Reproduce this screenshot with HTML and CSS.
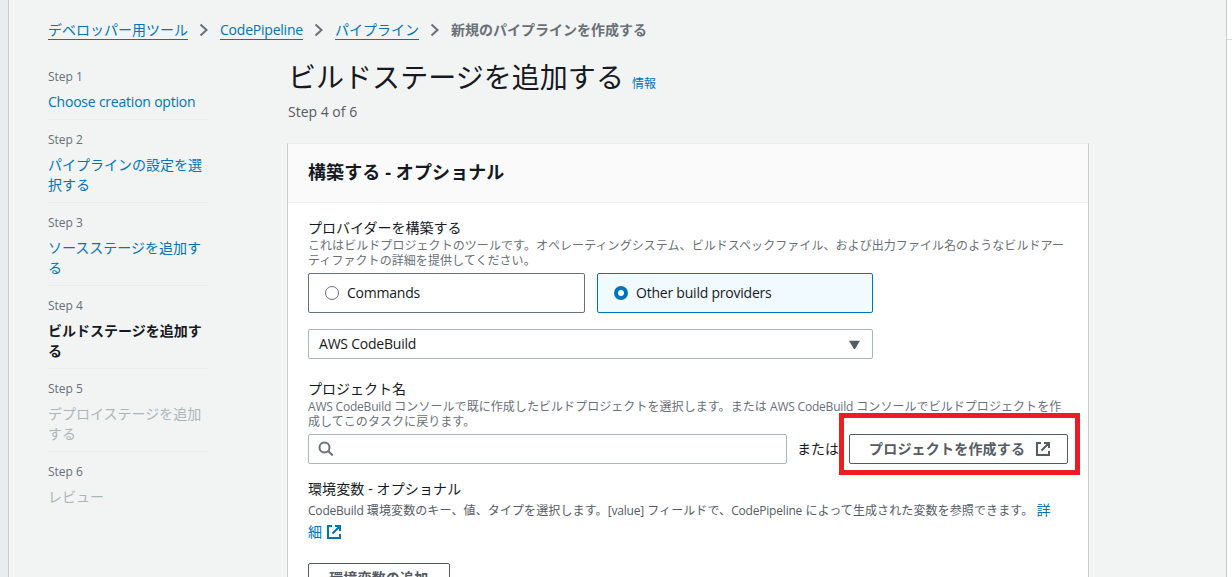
FILE: index.html
```
<!DOCTYPE html>
<html lang="ja">
<head>
<meta charset="utf-8">
<title>ビルドステージを追加する</title>
<link rel="stylesheet" href="styles.css">
</head>
<body>
<div class="app">
  <div class="nav-rail"></div>
  <main class="page">
    <nav class="breadcrumbs">
      <a>デベロッパー用ツール</a>
      <svg class="chevron" viewBox="0 0 10 14"><path d="M1.500 1.500 7.500 7l-6 5.500"/></svg>
      <a class="en">CodePipeline</a>
      <svg class="chevron" viewBox="0 0 10 14"><path d="M1.500 1.500 7.500 7l-6 5.500"/></svg>
      <a>パイプライン</a>
      <svg class="chevron" viewBox="0 0 10 14"><path d="M1.500 1.500 7.500 7l-6 5.500"/></svg>
      <span class="current">新規のパイプラインを作成する</span>
    </nav>
    <div class="columns">
      <ol class="steps">
        <li><small>Step 1</small><a class="en">Choose creation option</a></li>
        <li><small>Step 2</small><a>パイプラインの設定を選<br>択する</a></li>
        <li><small>Step 3</small><a>ソースステージを追加す<br>る</a></li>
        <li><small>Step 4</small><b>ビルドステージを追加す<br>る</b></li>
        <li><small>Step 5</small><span class="disabled">デプロイステージを追加<br>する</span></li>
        <li><small>Step 6</small><span class="disabled">レビュー</span></li>
      </ol>
      <section class="content">
        <div class="title"><h1>ビルドステージを追加する</h1><a class="info">情報</a></div>
        <p class="progress">Step 4 of 6</p>
        <div class="card">
          <header><h2>構築する - オプショナル</h2></header>
          <div class="card-body">
            <div class="label">プロバイダーを構築する</div>
            <p class="hint">これはビルドプロジェクトのツールです。オペレーティングシステム、ビルドスペックファイル、および出力ファイル名のようなビルドアー<br>ティファクトの詳細を提供してください。</p>
            <div class="tiles">
              <div class="tile"><i class="radio"></i><span class="en">Commands</span></div>
              <div class="tile selected"><i class="radio"></i><span class="en">Other build providers</span></div>
            </div>
            <div class="select"><span class="en">AWS CodeBuild</span><svg class="caret" viewBox="0 0 10 8"><path d="M0 .5h10L5.500 8h-1z"/></svg></div>
            <div class="label project-label">プロジェクト名</div>
            <p class="hint project-hint"><span class="en-s">AWS CodeBuild</span> コンソールで既に作成したビルドプロジェクトを選択します。または <span class="en-s">AWS CodeBuild</span> コンソールでビルドプロジェクトを作<br>成してこのタスクに戻ります。</p>
            <div class="project-row">
              <div class="search"><svg viewBox="0 0 16 16"><circle cx="6.500" cy="6.500" r="5"/><path d="m10.300 10.300 4.500 4.200"/></svg></div>
              <span class="or">または</span>
              <div class="create-wrap">
                <div class="button create"><span>プロジェクトを作成する</span><svg class="external" viewBox="0 0 16 16"><path d="M6 2H2v12h12v-4M9 2h5v5M14 2 6.500 9.500"/></svg></div>
                <div class="highlight"></div>
              </div>
            </div>
            <div class="label env-label">環境変数 - オプショナル</div>
            <p class="env-hint"><span class="en-s">CodeBuild</span> 環境変数のキー、値、タイプを選択します。<span class="en-s">[value]</span> フィールドで、<span class="en-s">CodePipeline</span> によって生成された変数を参照できます。 <a>詳<br>細 <svg class="external" viewBox="0 0 16 16"><path d="M6 2H2v12h12v-4M9 2h5v5M14 2 6.500 9.500"/></svg></a></p>
            <div class="button add-env">環境変数の追加</div>
          </div>
        </div>
      </section>
    </div>
  </main>
  <aside class="right-rail"><div></div></aside>
</div>
</body>
</html>
```
FILE: styles.css
```
* { box-sizing: border-box; }
html, body { margin: 0; height: 577px; overflow: hidden; }
body { font: 14px/20px "Open Sans", "Noto Sans CJK JP", sans-serif; color: #16191f; background: #fff; }
p, h1, h2, ol { margin: 0; padding: 0; }
a { color: #0073bb; }
svg { fill: none; stroke: currentColor; flex: none; }
.app { display: flex; height: 577px; overflow: hidden; }
.nav-rail { width: 9px; background: #eaeded; border-right: 1px solid #c6cccc; flex: none; }
.page { width: 1217px; flex: none; background: #f2f3f3; padding: 20px 0 0 39px; }
.right-rail { width: 6px; border-left: 1px solid #c6cccc; }
.right-rail div { height: 40px; border-bottom: 1px solid #d5dbdb; }
.en { letter-spacing: -.22px; }
.en-s { letter-spacing: -.2px; }
.breadcrumbs { display: flex; height: 20px; align-items: flex-start; white-space: nowrap; }
.breadcrumbs a { height: 20px; border-bottom: 1px solid #0073bb; }
.chevron { width: 10px; height: 14px; margin: 3px 11px; color: #687078; stroke-width: 2; }
.current { color: #687078; font-weight: 700; }
.columns { display: flex; }
.steps { list-style: none; width: 160px; margin: 27px 80px 0 0; flex: none; }
.steps li { border-bottom: 1px solid #eaeded; padding-bottom: 7px; margin-bottom: 10px; }
.steps li:last-child { border: 0; }
.steps small { display: block; font-size: 12px; line-height: 20px; margin-bottom: 5px; color: #687078; }
.steps a, .steps b, .steps .disabled { display: block; white-space: nowrap; }
.steps .disabled { color: #aab7b8; }
.content { width: 800px; flex: none; }
.title { display: flex; align-items: baseline; gap: 8px; height: 36px; margin-top: 19px; line-height: 36px; }
.title h1 { font-size: 28px; font-weight: 400; letter-spacing: .04px; }
.info { font-size: 12px; }
.progress { color: #545b64; margin: 7px 0 21px; }
.card { background: #fff; border: 1px solid #c6cccc; border-top-color: #eaeded; width: 802px; margin-left: -1px; height: 460px; }
.card header { height: 59px; background: #fafafa; border-bottom: 1px solid #eaeded; padding: 14px 20px; }
h2 { font-size: 18px; line-height: 28px; font-weight: 700; letter-spacing: .1px; }
.card-body { padding: 15px 0 0 20px; white-space: nowrap; }
.hint { font-size: 12px; line-height: 15px; color: #687078; letter-spacing: .06px; }
.project-hint { letter-spacing: .055px; }
.tiles { display: grid; grid-template-columns: 277px 276px; gap: 12px; margin-top: 5px; }
.tile { height: 40px; border: 1px solid #687078; border-radius: 2px; display: flex; align-items: center; padding-left: 16px; gap: 8px; }
.tile.selected { border-color: #0073bb; background: #f1faff; }
.radio { width: 14px; height: 14px; border: 1px solid #687078; border-radius: 50%; background: #fff; }
.selected .radio { border: 4px solid #0073bb; }
.select { width: 565px; height: 30px; border: 1px solid #aab7b8; border-radius: 2px; margin-top: 16px; display: flex; align-items: center; justify-content: space-between; padding: 0 12px 0 10px; }
.caret { width: 11px; height: 9px; fill: #545b64; stroke: none; }
.project-label { margin-top: 20px; }
.project-row { display: flex; margin-top: 5px; align-items: center; }
.search { width: 479px; height: 30px; border: 1px solid #aab7b8; border-radius: 2px; padding: 6px 9px; color: #687078; }
.search svg { display: block; width: 16px; height: 16px; stroke-width: 2; }
.or { width: 52px; margin-left: 10px; }
.button { border: 1px solid #545b64; border-radius: 2px; font-weight: 700; color: #545b64; background: #fff; letter-spacing: .2px; }
.create-wrap { position: relative; }
.create { width: 219px; height: 30px; display: flex; align-items: center; padding-left: 19px; gap: 10px; }
.external { width: 16px; height: 16px; stroke-width: 2; }
.highlight { position: absolute; left: -10px; top: -21px; width: 241px; height: 62px; border: 5px solid #ed1c24; }
.env-label { margin-top: 15px; letter-spacing: .12px; }
.env-hint { font-size: 12px; line-height: 21px; color: #545b64; letter-spacing: .11px; }
.env-hint a { font-size: 14px; }
.env-hint .external { vertical-align: -3px; }
.add-env { width: 142px; height: 30px; padding-left: 20px; line-height: 28px; margin-top: 20px; }
```
